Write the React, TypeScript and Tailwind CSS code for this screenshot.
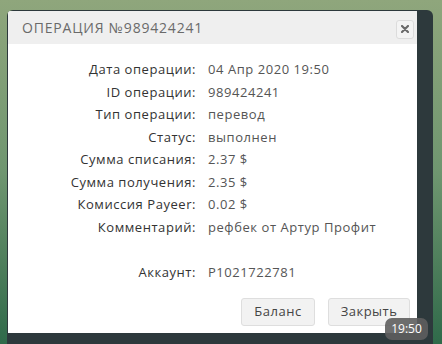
import React from 'react'

const rows: [string, string][] = [
  ['Дата операции:', '04 Апр 2020 19:50'],
  ['ID операции:', '989424241'],
  ['Тип операции:', 'перевод'],
  ['Статус:', 'выполнен'],
  ['Сумма списания:', '2.37 $'],
  ['Сумма получения:', '2.35 $'],
  ['Комиссия Payeer:', '0.02 $'],
  ['Комментарий:', 'рефбек от Артур Профит'],
  ['', ''],
  ['Аккаунт:', 'P1021722781'],
]

export default function App() {
  return (
    <div
      className="relative w-[442px] h-[344px] overflow-hidden bg-gradient-to-b from-[#8fa67c] via-[#6f9670] to-[#2f6a4a] pt-[10px] pl-[7px]"
      style={{ fontFamily: '"Open Sans", "Noto Sans", sans-serif' }}
    >
      <div className="w-[426px] h-[340px] rounded-[6px] bg-[#2d393c] pt-px pl-px pr-[16px] pb-[11px]">
        <div className="w-[409px] h-[322px] bg-white rounded-tl-[3px] flex flex-col">
          <div className="h-[33px] bg-[#efefef] flex items-center justify-between pl-[14px] pr-[3px] rounded-tl-[3px]">
            <span className="text-[14px] tracking-[0.8px] text-[#6a6a6a]">ОПЕРАЦИЯ №989424241</span>
            <button className="w-[18px] h-[19px] mt-[3px] border border-[#dcdcdc] rounded-[3px] bg-[#f4f4f4] flex items-center justify-center">
              <svg width="8" height="8" viewBox="0 0 8 8">
                <path d="M1 1L7 7M7 1L1 7" stroke="#6b6b6b" strokeWidth="2.2" strokeLinecap="round" />
              </svg>
            </button>
          </div>
          <div className="grid grid-cols-[188px_1fr] gap-x-[12px] pt-[14px] text-[13px] tracking-[0.55px]">
            {rows.map(([label, value], i) => (
              <React.Fragment key={i}>
                <div className="h-[22.5px] leading-[22.5px] text-right text-[#333]">{label}</div>
                <div className="h-[22.5px] leading-[22.5px] text-[#555]">{value}</div>
              </React.Fragment>
            ))}
          </div>
          <div className="flex justify-end gap-[13px] pr-[7px] mt-auto mb-[7px]">
            <button className="w-[74px] h-[28px] bg-[#f2f2f2] border border-[#dedede] rounded-[3px] text-[13px] tracking-[0.5px] text-[#444]">
              Баланс
            </button>
            <button className="w-[82px] h-[28px] bg-[#f2f2f2] border border-[#dedede] rounded-[3px] text-[13px] tracking-[0.5px] text-[#444]">
              Закрыть
            </button>
          </div>
        </div>
      </div>
      <div className="absolute left-[385px] top-[318px] w-[43px] h-[22px] rounded-[7px] bg-[#5e5e5e]/90 text-white text-[12px] flex items-center justify-center">
        19:50
      </div>
    </div>
  )
}
